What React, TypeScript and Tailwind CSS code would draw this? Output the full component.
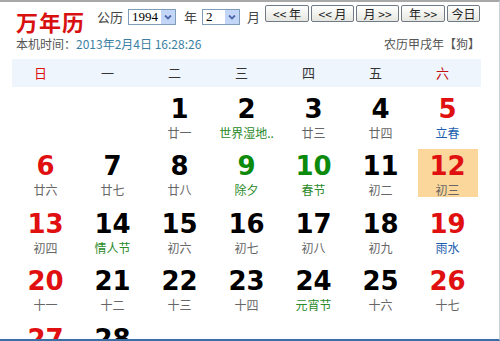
import React from "react";

type Day = { d: number; lunar: string; kind?: "fest" | "term"; numColor?: string; today?: boolean };

const RED = "text-[#e01010]";
const GREEN = "text-[#0b8a0b]";

const days: (Day | null)[] = [
  null,
  null,
  { d: 1, lunar: "廿一" },
  { d: 2, lunar: "世界湿地..", kind: "fest" },
  { d: 3, lunar: "廿三" },
  { d: 4, lunar: "廿四" },
  { d: 5, lunar: "立春", kind: "term", numColor: RED },
  { d: 6, lunar: "廿六", numColor: RED },
  { d: 7, lunar: "廿七" },
  { d: 8, lunar: "廿八" },
  { d: 9, lunar: "除夕", kind: "fest", numColor: GREEN },
  { d: 10, lunar: "春节", kind: "fest", numColor: GREEN },
  { d: 11, lunar: "初二" },
  { d: 12, lunar: "初三", numColor: RED, today: true },
  { d: 13, lunar: "初四", numColor: RED },
  { d: 14, lunar: "情人节", kind: "fest" },
  { d: 15, lunar: "初六" },
  { d: 16, lunar: "初七" },
  { d: 17, lunar: "初八" },
  { d: 18, lunar: "初九" },
  { d: 19, lunar: "雨水", kind: "term", numColor: RED },
  { d: 20, lunar: "十一", numColor: RED },
  { d: 21, lunar: "十二" },
  { d: 22, lunar: "十三" },
  { d: 23, lunar: "十四" },
  { d: 24, lunar: "元宵节", kind: "fest" },
  { d: 25, lunar: "十六" },
  { d: 26, lunar: "十七", numColor: RED },
  { d: 27, lunar: "十八", numColor: RED },
  { d: 28, lunar: "十九" },
  null,
  null,
  null,
  null,
  null,
];

const weekdays = ["日", "一", "二", "三", "四", "五", "六"];

function Select({ value, width }: { value: string; width: string }) {
  return (
    <div className={`flex h-[16px] ${width} mt-[7px] shrink-0 border border-[#7f9db9] bg-white`}>
      <div className="flex-1 pl-[3px] text-[13px] leading-[14px] text-black" style={{ fontFamily: '"Liberation Serif", serif' }}>
        {value}
      </div>
      <div className="flex w-[14px] items-center justify-center bg-[#c4d6f8]">
        <svg width="8" height="6" viewBox="0 0 8 6">
          <path d="M1 1.5 L4 4.5 L7 1.5" fill="none" stroke="#4d6ba8" strokeWidth="1.8" />
        </svg>
      </div>
    </div>
  );
}

function Btn({ label, width }: { label: string; width: string }) {
  return (
    <div
      className={`ml-[2px] mt-[3px] flex h-[17px] ${width} shrink-0 items-center justify-center rounded-[2px] border border-[#6f7a86] bg-gradient-to-b from-white to-[#e6e6e0] text-[12px] leading-[15px] text-[#222] whitespace-pre`}
    >
      {label}
    </div>
  );
}

export default function App() {
  return (
    <div
      className="h-[341px] w-[500px] overflow-hidden border-t-2 border-b-2 border-r border-t-[#a8a8a8] border-b-[#3a6ea5] border-r-[#c8d2dc] bg-white"
      style={{ fontFamily: '"Noto Sans CJK SC", "Noto Sans", sans-serif' }}
    >
      {/* top toolbar */}
      <div className="flex h-[28px] items-start pl-[16px]">
        <div className="mt-[8px] h-[22px] w-[72px] shrink-0 text-[22px] font-bold leading-[22px] tracking-[1px] text-[#d81010]">
          万年历
        </div>
        <div className="ml-[9px] mt-[7px] h-[16px] shrink-0 text-[13px] leading-[16px] text-[#444]">公历</div>
        <div className="ml-[5px] flex">
          <Select value="1994" width="w-[48px]" />
        </div>
        <div className="ml-[8px] mt-[7px] h-[16px] shrink-0 text-[13px] leading-[16px] text-[#444]">年</div>
        <div className="ml-[5px] flex">
          <Select value="2" width="w-[38px]" />
        </div>
        <div className="ml-[7px] mt-[7px] h-[16px] shrink-0 text-[13px] leading-[16px] text-[#444]">月</div>
        <div className="ml-[3px] flex">
          <Btn label="<< 年" width="w-[44px]" />
          <Btn label="<< 月" width="w-[43px]" />
          <Btn label="月 >>" width="w-[43px]" />
          <Btn label="年 >>" width="w-[44px]" />
          <Btn label="今日" width="w-[33px]" />
        </div>
      </div>

      {/* info row */}
      <div className="mt-[6px] flex h-[16px] items-center justify-between pl-[16px] pr-[19px] text-[12px] leading-[16px]">
        <div className="text-[#555]">
          本机时间：<span className="text-[#3b7fa3]">2013年2月4日 16:28:26</span>
        </div>
        <div className="text-[#555]">农历甲戌年【狗】</div>
      </div>

      {/* calendar */}
      <div className="ml-[12px] mt-[7px] w-[469px]">
        <div className="grid h-[28px] grid-cols-7 bg-[#eef5fd]">
          {weekdays.map((w, i) => (
            <div
              key={w}
              className={`flex items-center justify-center pr-[10px] text-[13px] ${
                i === 0 ? "text-[#e01010]" : i === 6 ? "text-[#c41010]" : "text-[#333]"
              }`}
            >
              {w}
            </div>
          ))}
        </div>
        <div className="grid grid-cols-7">
          {days.map((day, i) => (
            <div key={i} className="flex h-[57.5px] justify-center pt-[4.5px]">
              {day && (
                <div
                  className={`flex h-[48px] w-[60px] flex-col items-center pt-[2px] ${
                    day.today ? "bg-[#fbd79b]" : ""
                  }`}
                >
                  <div
                    className={`h-[30px] text-[26px] font-bold leading-[30px] ${day.numColor ?? "text-black"}`}
                    style={{ fontFamily: '"DejaVu Sans", sans-serif' }}
                  >
                    {day.d}
                  </div>
                  <div
                    className={`mt-[2px] h-[14px] whitespace-nowrap text-[12px] leading-[14px] ${
                      day.kind === "fest"
                        ? "text-[#2a8a2a]"
                        : day.kind === "term"
                        ? "text-[#1d5fae]"
                        : "text-[#666]"
                    }`}
                  >
                    {day.lunar}
                  </div>
                </div>
              )}
            </div>
          ))}
        </div>
      </div>
    </div>
  );
}
